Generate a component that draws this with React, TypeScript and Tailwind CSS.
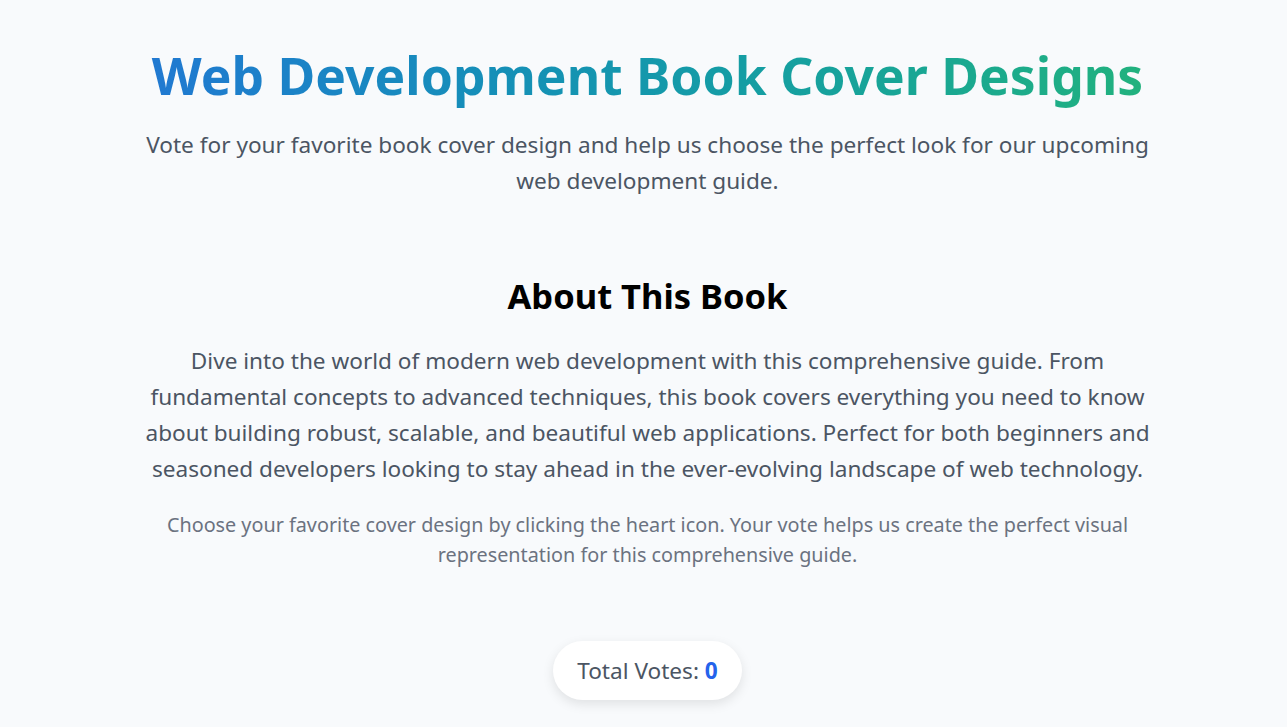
const App = () => {
  return (
    <div className="min-h-screen bg-[#f8fafc] pl-[8px] font-['Noto_Sans',sans-serif]">
      <div className="mx-auto w-[1020px] pt-[43px] text-center">
        <h1 className="bg-gradient-to-r from-[#2178d2] to-[#22b27c] bg-clip-text text-[51.6px] leading-[65px] font-bold text-transparent">
          Web Development Book Cover Designs
        </h1>
        <p className="mt-[19px] text-[22.6px] leading-[36px] text-[#4b5563]">
          Vote for your favorite book cover design and help us choose the perfect look for our upcoming web development guide.
        </p>

        <section className="mt-[76px]">
          <h2 className="text-[34.5px] leading-[41px] font-bold text-black">About This Book</h2>
          <p className="mt-[27px] text-[22.6px] leading-[36px] text-[#4b5563]">
            Dive into the world of modern web development with this comprehensive guide. From fundamental concepts to advanced techniques, this book covers everything you need to know about building robust, scalable, and beautiful web applications. Perfect for both beginners and seasoned developers looking to stay ahead in the ever-evolving landscape of web technology.
          </p>
          <p className="mx-auto mt-[23px] w-[1000px] text-[19.8px] leading-[30px] text-[#6b7280]">
            Choose your favorite cover design by clicking the heart icon. Your vote helps us create the perfect visual representation for this comprehensive guide.
          </p>
        </section>

        <div className="mt-[71px] flex justify-center pb-10">
          <div className="flex h-[59px] items-center rounded-full bg-white px-6 text-[22.6px] text-[#4b5563] shadow-[0_4px_12px_rgba(0,0,0,0.1)]">
            Total Votes:&nbsp;<span className="font-bold text-[#2563eb]">0</span>
          </div>
        </div>
      </div>
    </div>
  )
}

export default App
